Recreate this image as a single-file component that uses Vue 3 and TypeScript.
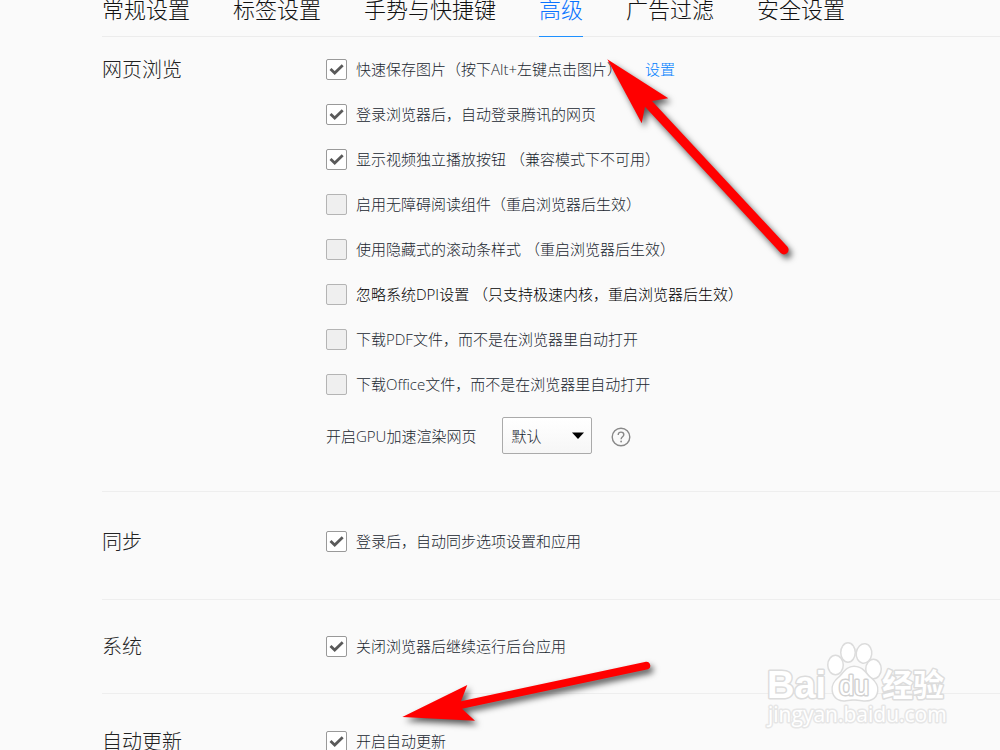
<script setup lang="ts">
import { reactive, ref } from 'vue'

interface Option {
  id: string
  label: string
  checked: boolean
  strong?: boolean
  link?: string
}

interface Section {
  id: string
  title: string
  options: Option[]
}

const tabs: string[] = ['常规设置', '标签设置', '手势与快捷键', '高级', '广告过滤', '安全设置']
const activeTab = ref<string>('高级')
const gpuMode = ref<string>('默认')

const sections = reactive<Section[]>([
  {
    id: 'browse',
    title: '网页浏览',
    options: [
      { id: 'save-image', label: '快速保存图片（按下Alt+左键点击图片）', checked: true, link: '设置' },
      { id: 'auto-login', label: '登录浏览器后，自动登录腾讯的网页', checked: true },
      { id: 'video-button', label: '显示视频独立播放按钮 （兼容模式下不可用）', checked: true },
      { id: 'accessible', label: '启用无障碍阅读组件（重启浏览器后生效）', checked: false },
      { id: 'scrollbar', label: '使用隐藏式的滚动条样式 （重启浏览器后生效）', checked: false },
      { id: 'dpi', label: '忽略系统DPI设置 （只支持极速内核，重启浏览器后生效）', checked: false, strong: true },
      { id: 'pdf', label: '下载PDF文件，而不是在浏览器里自动打开', checked: false },
      { id: 'office', label: '下载Office文件，而不是在浏览器里自动打开', checked: false },
    ],
  },
  {
    id: 'sync',
    title: '同步',
    options: [{ id: 'auto-sync', label: '登录后，自动同步选项设置和应用', checked: true }],
  },
  {
    id: 'system',
    title: '系统',
    options: [{ id: 'background', label: '关闭浏览器后继续运行后台应用', checked: true }],
  },
  {
    id: 'update',
    title: '自动更新',
    options: [{ id: 'auto-update', label: '开启自动更新', checked: true }],
  },
])
</script>

<template>
  <div class="page">
    <nav class="tabs">
      <button
        v-for="tab in tabs"
        :key="tab"
        type="button"
        class="tab"
        :class="{ active: tab === activeTab }"
        @click="activeTab = tab"
      >
        {{ tab }}
      </button>
    </nav>

    <main>
      <section v-for="section in sections" :key="section.id" class="section" :class="section.id">
        <h2 class="title">{{ section.title }}</h2>
        <div class="options">
          <div v-for="option in section.options" :key="option.id" class="row">
            <span class="box">
              <input :id="option.id" v-model="option.checked" type="checkbox" />
              <svg v-if="option.checked" class="tick" viewBox="0 0 21 21" aria-hidden="true">
                <path d="M4.5 10 8.700 14 16.700 6.200" fill="none" stroke="#5a5a5a" stroke-width="2.8" />
              </svg>
            </span>
            <label :for="option.id" :class="{ strong: option.strong }">{{ option.label }}</label>
            <a v-if="option.link" href="#" class="link">{{ option.link }}</a>
          </div>

          <div v-if="section.id === 'browse'" class="gpu">
            <label for="gpu-mode">开启GPU加速渲染网页</label>
            <span class="picker">
              <select id="gpu-mode" v-model="gpuMode">
                <option>默认</option>
                <option>开启</option>
                <option>关闭</option>
              </select>
              <svg class="caret" width="12" height="7" viewBox="0 0 12 7" aria-hidden="true">
                <path d="M0 .5h12L6 7z" fill="#000" />
              </svg>
            </span>
            <button type="button" class="help" aria-label="帮助">
              <svg width="20" height="20" viewBox="0 0 20 20" aria-hidden="true">
                <circle cx="10" cy="10" r="8.8" fill="none" stroke="#888" stroke-width="1.4" />
                <path
                  d="M7.2 8C7.2 6.1 8.4 5.1 10 5.1s2.8 1 2.8 2.6c0 2.1-2.7 2.2-2.7 4.6"
                  fill="none"
                  stroke="#888"
                  stroke-width="1.4"
                />
                <circle cx="10.1" cy="14.5" r="0.9" fill="#888" />
              </svg>
            </button>
          </div>
        </div>
      </section>
    </main>

    <svg class="overlay" width="1000" height="750" viewBox="0 0 1000 750" aria-hidden="true">
      <g class="watermark">
        <text x="767" y="698" class="brand">Bai</text>
        <ellipse cx="835.5" cy="665" rx="7" ry="9" />
        <ellipse cx="848" cy="652.500" rx="6.500" ry="9" />
        <ellipse cx="864" cy="653.500" rx="7" ry="9" transform="rotate(8 864 653.5)" />
        <ellipse cx="873.5" cy="669" rx="7" ry="9" />
        <path
          d="M854 667c-7 0-10 6-14 10-5 4-8 8-7 14 1 7 7 10 13 9 6-1 10-1 16 0 7 1 14-1 15-9 1-6-3-10-8-14-4-4-7-10-15-10z"
        />
        <text x="839" y="695" class="du">du</text>
        <text x="882" y="696" class="product">经验</text>
        <text x="768" y="722" class="site">jingyan.baidu.com</text>
      </g>
      <g class="arrows">
        <path d="M607.300 59.300 668.300 98.300 652 101 787.300 246.500A4.600 4.600 0 0 1 780.700 253L645 106.700 641.700 123.300Z" />
        <path d="M402.300 717 467.300 685 461 701.300 646 661.700A4 4 0 0 1 648 669.300L462 708.700 475 720.700Z" />
      </g>
    </svg>
  </div>
</template>

<style>
html {
  scrollbar-width: none;
}

body {
  margin: 0;
  background: #fafafa;
}
</style>

<style scoped>
.page {
  position: relative;
  min-height: 100vh;
  padding-left: 102px;
  overflow: hidden;
  box-sizing: border-box;
  background: #fafafa;
  color: #20262f;
  font: 300 15px/24px 'Open Sans', 'Noto Sans CJK SC', sans-serif;
}

button,
select {
  font: inherit;
  color: inherit;
}

.tabs {
  display: flex;
  gap: 43px;
  height: 36px;
  border-bottom: 1px solid #ececec;
}

.tab {
  flex: none;
  height: 37px;
  padding: 0 0 18px;
  border: 0;
  border-bottom: 1px solid transparent;
  background: none;
  color: #111;
  font-size: 22px;
  line-height: 18px;
  white-space: nowrap;
}

.tab.active {
  color: #0a74ff;
  border-bottom-color: #1e90ff;
}

.section {
  display: grid;
  grid-template-columns: 224px 1fr;
  border-bottom: 1px solid #eee;
}

.section:last-child {
  border-bottom: 0;
}

.browse {
  padding: 20px 0 37px;
}

.sync {
  padding: 37px 0 45px;
}

.system {
  padding: 34px 0;
}

.update {
  padding: 35px 0 0;
}

.title {
  margin: 0;
  padding-top: 1px;
  color: #222;
  font-size: 20px;
  font-weight: 300;
  line-height: 24px;
}

.options {
  display: flex;
  flex-direction: column;
  gap: 21px;
}

.row {
  display: flex;
  align-items: center;
  height: 24px;
  white-space: nowrap;
}

.row label,
.link {
  padding-bottom: 1px;
}

.box {
  display: grid;
  flex: none;
  width: 21px;
  height: 21px;
  margin-right: 9px;
}

.box input,
.tick {
  grid-area: 1 / 1;
  width: 21px;
  height: 21px;
  margin: 0;
}

.box input {
  appearance: none;
  box-sizing: border-box;
  border: 1px solid #b4b4b4;
  border-radius: 2px;
  background: #efefef;
}

.box input:checked {
  border-color: #999;
  background: #fff;
}

.tick,
.caret {
  pointer-events: none;
}

.row .strong {
  color: #000;
}

.link {
  margin-left: 23px;
  color: #0080ff;
  text-decoration: none;
}

.gpu {
  display: flex;
  align-items: center;
  height: 37px;
  white-space: nowrap;
}

.picker {
  display: grid;
  align-items: center;
  width: 90px;
  margin: 0 19px 0 26px;
}

.picker select {
  grid-area: 1 / 1;
  appearance: none;
  width: 90px;
  height: 37px;
  padding: 0 8px;
  border: 1px solid #aaa;
  border-radius: 2px;
  background: linear-gradient(#fff, #f6f6f6);
}

.caret {
  grid-area: 1 / 1;
  justify-self: end;
  margin-right: 8px;
}

.help {
  display: grid;
  padding: 2px 0 0;
  border: 0;
  background: none;
}

.overlay {
  position: absolute;
  top: 0;
  left: 0;
  pointer-events: none;
}

.arrows {
  fill: #f00;
  filter: drop-shadow(3px 4px 3px rgb(0 0 0 / 65%));
}

.watermark {
  fill: #fff;
  stroke: #dcdcdc;
  stroke-width: 3px;
  paint-order: stroke;
  stroke-linejoin: round;
}

.brand {
  font: 700 38px 'Liberation Sans', sans-serif;
}

.du {
  font: 400 27px 'Liberation Sans', sans-serif;
  stroke: #d2d2d2;
}

.product {
  font: 700 31px 'Noto Sans CJK SC', sans-serif;
}

.site {
  font: 400 21px 'Open Sans', sans-serif;
  stroke: #e6e6e6;
}
</style>
